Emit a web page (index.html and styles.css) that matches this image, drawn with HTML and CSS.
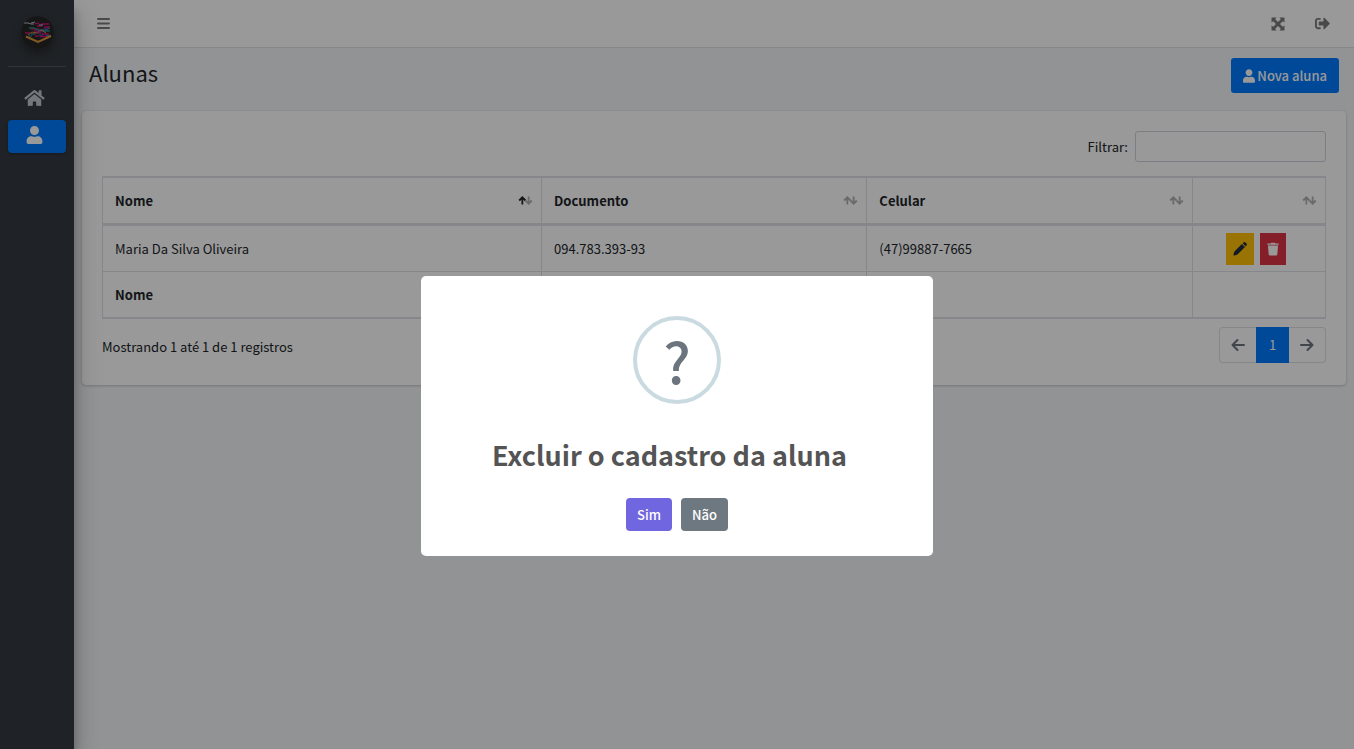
FILE: index.html
```html
<!DOCTYPE html>
<html lang="pt-BR">
<head>
<meta charset="utf-8">
<meta name="viewport" content="width=device-width, initial-scale=1">
<title>Alunas</title>
<link rel="stylesheet" href="styles.css">
</head>
<body>
<svg class="sprite" aria-hidden="true">
  <symbol id="user" viewBox="0 0 448 512"><path d="M224 256c70.7 0 128-57.3 128-128S294.7 0 224 0 96 57.3 96 128s57.3 128 128 128zm89.6 32h-16.7c-22.2 10.2-46.9 16-72.9 16s-50.6-5.8-72.9-16h-16.7C60.2 288 0 348.2 0 422.4V464c0 26.500 21.500 48 48 48h352c26.500 0 48-21.500 48-48v-41.600c0-74.200-60.200-134.400-134.400-134.400z"/></symbol>
  <symbol id="sort" viewBox="0 0 16 10"><path class="up" d="M4.500 9.500V1.500M1 5l3.500-3.500L8 5"/><path class="down" d="M11.500 .5v8M8 5l3.500 3.500L15 5"/></symbol>
</svg>
<div class="layout">
  <aside class="sidebar">
    <a class="brand" href="#" aria-label="Início">
      <svg class="logo" viewBox="0 0 33 33" fill="none">
        <circle cx="16.500" cy="16.500" r="16.500" fill="#252525"/>
        <path stroke="#d1127c" stroke-width="1.500" d="M14 7.500h4M20 8h8M16 10h5M23 11h6M10 13h8M13 15h11M4 17h5M12 17h8M21 18h7M14 20h4M19 20.500h8"/>
        <path stroke="#258b7b" stroke-width="1.300" d="M8 12h5l4 2h6l6-2M10 18h4M22 15h7"/>
        <path stroke="#2785bd" stroke-width="1.200" d="M20 14h7M18 19h4M25 19.500h5M8 20h3"/>
        <path stroke="#c98a38" d="M7 19l4-3 5 1 4-3 5 3"/>
        <path stroke="#b8c0c5" d="M3 7h4l3 1h3M10 7l4-1M18 9h4"/>
        <path stroke="#713aa3" stroke-width="1.200" d="M22 13h5M16 16h6M24 22h3"/>
        <path stroke="#dc963c" stroke-width="2" d="M5 20.500l12 5.500 13-6"/>
      </svg>
    </a>
    <nav class="menu" aria-label="Principal">
      <a class="menu-link" href="#" aria-label="Home">
        <svg class="icon-home" viewBox="0 0 576 512" fill="currentColor"><path d="M280.370 148.260L96 300.110V464a16 16 0 0 0 16 16l112.060-.29a16 16 0 0 0 15.920-16V368a16 16 0 0 1 16-16h64a16 16 0 0 1 16 16v95.640a16 16 0 0 0 16 16.050L464 480a16 16 0 0 0 16-16V300L295.670 148.260a12.190 12.190 0 0 0-15.300 0zM571.600 251.470L488 182.560V44.050a12 12 0 0 0-12-12h-56a12 12 0 0 0-12 12v72.610L318.470 43a48 48 0 0 0-61 0L4.340 251.470a12 12 0 0 0-1.600 16.900l25.500 31A12 12 0 0 0 45.150 301l235.220-193.740a12.190 12.190 0 0 1 15.300 0L530.900 301a12 12 0 0 0 16.900-1.600l25.500-31a12 12 0 0 0-1.700-16.930z"/></svg>
      </a>
      <a class="menu-link active" href="#" aria-label="Alunas" aria-current="page">
        <svg class="icon-user" fill="currentColor"><use href="#user"/></svg>
      </a>
    </nav>
  </aside>

  <div class="page">
    <header class="topbar">
      <button class="icon-button" type="button" aria-label="Menu">
        <svg class="icon-bars" viewBox="0 0 13 11" fill="none" stroke="currentColor" stroke-width="2" stroke-linecap="round"><path d="M1 1h11M1 5.500h11M1 10h11"/></svg>
      </button>
      <div class="topbar-actions">
        <button class="icon-button" type="button" aria-label="Tela cheia">
          <svg class="icon-expand" viewBox="0 0 14 14" fill="currentColor"><path d="M1 .5h4.500L4.200 2.200 7 5l2.800-2.800L8.500.5H13q.5 0 .5.500v4.500l-1.700-1.300L9 7l2.800 2.800 1.700-1.300V13q0 .5-.5.500H8.500l1.300-1.700L7 9l-2.800 2.800 1.300 1.700H1q-.5 0-.5-.5V8.500l1.700 1.300L5 7 2.200 4.200.5 5.500V1Q.5.500 1 .5z"/></svg>
        </button>
        <button class="icon-button" type="button" aria-label="Sair">
          <svg class="icon-exit" viewBox="0 0 512 512" fill="currentColor"><path d="M497 273L329 441c-15 15-41 4.500-41-17v-96H152c-13.300 0-24-10.700-24-24v-96c0-13.300 10.700-24 24-24h136V88c0-21.400 25.900-32 41-17l168 168c9.300 9.400 9.300 24.600 0 34zM192 436v-40c0-6.600-5.400-12-12-12H96c-17.700 0-32-14.300-32-32V160c0-17.700 14.300-32 32-32h84c6.600 0 12-5.400 12-12V76c0-6.600-5.400-12-12-12H96c-53 0-96 43-96 96v192c0 53 43 96 96 96h84c6.600 0 12-5.400 12-12z"/></svg>
        </button>
      </div>
    </header>

    <main class="content">
      <div class="heading">
        <h1>Alunas</h1>
        <button class="btn-new" type="button"><svg class="icon-new" fill="currentColor"><use href="#user"/></svg>Nova aluna</button>
      </div>
      <section class="card">
        <div class="filter">
          <label for="filter">Filtrar:</label>
          <input id="filter" type="search">
        </div>
        <table>
          <colgroup><col class="col-name"><col class="col-data"><col class="col-data"><col></colgroup>
          <thead>
            <tr>
              <th aria-sort="ascending"><div class="th">Nome<svg class="sort ascending"><use href="#sort"/></svg></div></th>
              <th><div class="th">Documento<svg class="sort"><use href="#sort"/></svg></div></th>
              <th><div class="th">Celular<svg class="sort"><use href="#sort"/></svg></div></th>
              <th aria-label="Ações"><div class="th end"><svg class="sort"><use href="#sort"/></svg></div></th>
            </tr>
          </thead>
          <tbody>
            <tr>
              <td>Maria Da Silva Oliveira</td>
              <td>094.783.393-93</td>
              <td>(47)99887-7665</td>
              <td class="actions-cell">
                <div class="actions">
                  <button class="edit" type="button" aria-label="Editar"><svg class="icon-action" viewBox="0 0 16 16" fill="currentColor"><path d="M10.200 2.300l3.500 3.500-8 8c-.8.8-2.600 1.500-4.200 1.700-.6.100-1-.3-.9-.9.200-1.600.8-3.400 1.600-4.200zM11 1.500l.7-.7a2 2 0 0 1 2.800 0l.7.700a2 2 0 0 1 0 2.800l-.7.700z"/></svg></button>
                  <button class="remove" type="button" aria-label="Excluir"><svg class="icon-action" viewBox="0 0 16 16" fill="currentColor"><path d="M6 .8h4l.8 1H14a.6.600 0 0 1 .6.600v.8H1.400v-.8a.6.600 0 0 1 .6-.6h3.200zM2.200 4h11.600l-.9 10a1.500 1.500 0 0 1-1.500 1.400H4.600A1.500 1.500 0 0 1 3.100 14z"/></svg></button>
                </div>
              </td>
            </tr>
          </tbody>
          <tfoot>
            <tr><th>Nome</th><th>Documento</th><th>Celular</th><td></td></tr>
          </tfoot>
        </table>
        <div class="table-footer">
          <p>Mostrando 1 até 1 de 1 registros</p>
          <nav class="pagination" aria-label="Paginação">
            <a href="#" aria-label="Anterior"><svg class="arrow" viewBox="0 0 14 14"><path d="M13 7H1.500M6.500 2l-5 5 5 5"/></svg></a>
            <a class="current" href="#" aria-current="page">1</a>
            <a href="#" aria-label="Próxima"><svg class="arrow" viewBox="0 0 14 14"><path d="M1 7h11.500M7.500 2l5 5-5 5"/></svg></a>
          </nav>
        </div>
      </section>
    </main>
  </div>
</div>

<div class="overlay">
  <div class="dialog" role="dialog" aria-modal="true" aria-labelledby="dialog-title">
    <div class="question">?</div>
    <h2 id="dialog-title">Excluir o cadastro da aluna</h2>
    <div class="dialog-actions">
      <button class="yes" type="button">Sim</button>
      <button class="no" type="button">Não</button>
    </div>
  </div>
</div>
</body>
</html>
```
FILE: styles.css
```css
* { box-sizing: border-box; }
body {
  margin: 0;
  background: #f4f6f9;
  color: #212529;
  font-family: "Noto Sans CJK SC", "Noto Sans", sans-serif;
  font-size: 13px;
  line-height: 20px;
}
button, input { font: inherit; }
button { border: 0; cursor: pointer; }
a { text-decoration: none; }
svg { display: block; }
.sprite { position: absolute; width: 0; height: 0; }

.layout { display: flex; min-height: 100vh; }
.sidebar {
  flex: 0 0 74px;
  padding: 0 8px;
  background: #343a40;
  box-shadow: 0 14px 28px rgba(0, 0, 0, .25), 0 10px 10px rgba(0, 0, 0, .22);
  z-index: 1;
}
.brand {
  display: flex;
  justify-content: center;
  height: 67px;
  padding-top: 16px;
  border-bottom: 1px solid #4f5962;
}
.logo {
  width: 33px;
  height: 33px;
  border-radius: 50%;
  box-shadow: 0 5px 8px rgba(0, 0, 0, .3);
}
.menu { display: grid; gap: 4px; padding-top: 16px; }
.menu-link {
  display: flex;
  align-items: center;
  height: 33px;
  padding: 0 0 3px 16px;
  border-radius: 4px;
  color: #c2c7d0;
}
.menu-link.active {
  background: #007bff;
  color: #fff;
  box-shadow: 0 1px 3px rgba(0, 0, 0, .3);
}
.icon-home { width: 21px; height: 18px; }
.icon-user { width: 21px; height: 18px; }

.page { flex: 1; min-width: 0; }
.topbar {
  display: flex;
  justify-content: space-between;
  align-items: center;
  height: 48px;
  padding: 0 17px 0 15px;
  background: #fff;
  border-bottom: 1px solid #dee2e6;
}
.topbar-actions { display: flex; gap: 16px; }
.icon-button {
  display: flex;
  align-items: center;
  justify-content: center;
  width: 29px;
  height: 31px;
  padding: 0;
  background: none;
  color: #7b7b7b;
}
.icon-bars { width: 13px; height: 11px; }
.icon-expand { width: 14px; height: 14px; }
.icon-exit { width: 15px; height: 15px; }
.content { padding: 10px 8px; }
.heading {
  display: flex;
  justify-content: space-between;
  padding: 0 7px;
  margin-bottom: 18px;
}
h1 { margin: 0; font-size: 22px; font-weight: 400; line-height: 28px; }
.btn-new {
  display: flex;
  align-items: center;
  gap: 2px;
  height: 35px;
  padding: 0 12px;
  border-radius: 3px;
  background: #007bff;
  color: #fff;
  font-weight: 500;
}
.icon-new { width: 12px; height: 14px; }

.card {
  padding: 20px;
  border-radius: 4px;
  background: #fff;
  box-shadow: 0 0 1px rgba(0, 0, 0, .13), 0 1px 3px rgba(0, 0, 0, .2);
}
.filter { display: flex; justify-content: flex-end; align-items: center; gap: 7px; }
.filter input {
  width: 191px;
  height: 31px;
  border: 1px solid #ced4da;
  border-radius: 3px;
  background: #fff;
}
table {
  width: 100%;
  margin-top: 14px;
  table-layout: fixed;
  border-collapse: separate;
  border-spacing: 0;
  border: solid #dee2e6;
  border-width: 2px 0 2px 1px;
}
.col-name { width: 35.9%; }
.col-data { width: 26.6%; }
th, td {
  height: 46px;
  padding: 0 12px;
  border-right: 1px solid #dee2e6;
  text-align: left;
}
th { font-weight: 700; }
thead th { height: 48px; padding-right: 8px; border-bottom: 3px solid #dee2e6; }
tbody td { border-bottom: 1px solid #dee2e6; }
tfoot th, tfoot td { height: 45px; }
.th { display: flex; align-items: center; justify-content: space-between; }
.th.end { justify-content: flex-end; }
.sort {
  --up: #b0b1b2;
  width: 15px;
  height: 9px;
  fill: none;
  stroke: #b0b1b2;
  stroke-width: 2;
}
.sort.ascending { --up: #212529; }
.up { stroke: var(--up); }
.actions-cell { padding-right: 18px; }
.actions { display: flex; justify-content: center; gap: 6px; }
.actions button { display: flex; align-items: center; height: 32px; }
.icon-action { width: 14px; height: 14px; }
.edit { padding: 0 7px; background: #ffc107; color: #1f2d3d; }
.remove { padding: 0 6px; background: #dc3545; color: #fff; }
.table-footer { display: flex; justify-content: space-between; padding-top: 8px; height: 46px; }
.table-footer p { margin: 10px 0 0; }
.pagination { display: flex; height: 36px; }
.pagination a {
  display: flex;
  align-items: center;
  justify-content: center;
  width: 37px;
  border: 1px solid #dee2e6;
  color: #6c757d;
}
.pagination a:first-child { border-radius: 4px 0 0 4px; border-right: 0; }
.pagination a:last-child { border-radius: 0 4px 4px 0; border-left: 0; }
.pagination .current { width: 33px; border-color: #007bff; background: #007bff; color: #fff; }
.arrow { width: 14px; height: 14px; fill: none; stroke: currentColor; stroke-width: 2; stroke-linecap: round; stroke-linejoin: round; }

.overlay {
  position: fixed;
  inset: 0;
  z-index: 10;
  display: flex;
  justify-content: center;
  align-items: flex-start;
  padding: 276px 10px 10px;
  background: rgba(0, 0, 0, .4);
}
.dialog {
  display: flex;
  flex-direction: column;
  align-items: center;
  width: 512px;
  max-width: 100%;
  padding: 40px 16px 25px;
  border-radius: 5px;
  background: #fff;
}
.question {
  display: flex;
  align-items: center;
  justify-content: center;
  width: 88px;
  height: 88px;
  border: 4px solid #c9dae1;
  border-radius: 50%;
  color: #6c757d;
  font-size: 56px;
  font-weight: 500;
  line-height: 80px;
}
h2 {
  margin: 31px 0 23px;
  padding-right: 15px;
  color: #545454;
  font-size: 27px;
  font-weight: 700;
  line-height: 40px;
}
.dialog-actions { display: flex; gap: 9px; }
.dialog-actions button {
  height: 33px;
  padding: 0 11px;
  border-radius: 4px;
  color: #fff;
  font-weight: 500;
}
.yes { background: #7066e0; }
.no { background: #6e7881; }
```
